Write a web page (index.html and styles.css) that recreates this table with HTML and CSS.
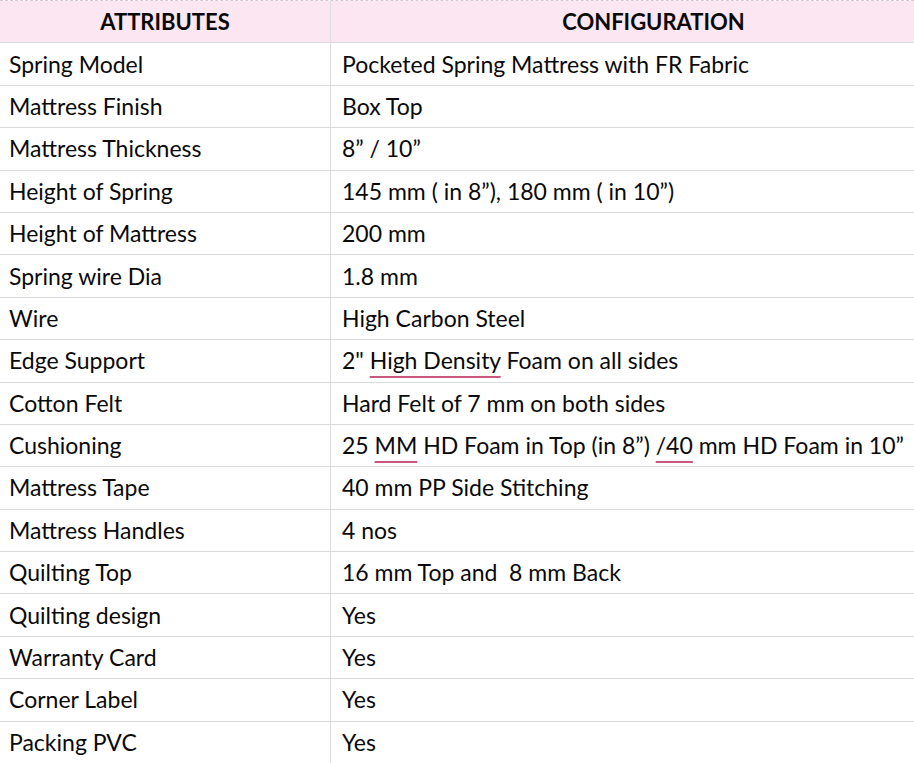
FILE: index.html
```html
<!DOCTYPE html>
<html>
<head>
<meta charset="utf-8">
<link rel="stylesheet" href="styles.css">
</head>
<body>
<div class="sheet">
  <div class="row head"><div class="c1"><span>ATTRIBUTES</span></div><div class="c2"><span>CONFIGURATION</span></div></div>
  <div class="row"><div class="c1"><span>Spring Model</span></div><div class="c2"><span>Pocketed Spring Mattress with FR Fabric</span></div></div>
  <div class="row"><div class="c1"><span>Mattress Finish</span></div><div class="c2"><span>Box Top</span></div></div>
  <div class="row"><div class="c1"><span>Mattress Thickness</span></div><div class="c2"><span>8” / 10”</span></div></div>
  <div class="row"><div class="c1"><span>Height of Spring</span></div><div class="c2"><span>145 mm ( in 8”), 180 mm ( in 10”)</span></div></div>
  <div class="row"><div class="c1"><span>Height of Mattress</span></div><div class="c2"><span>200 mm</span></div></div>
  <div class="row"><div class="c1"><span>Spring wire Dia</span></div><div class="c2"><span>1.8 mm</span></div></div>
  <div class="row"><div class="c1"><span>Wire</span></div><div class="c2"><span>High Carbon Steel</span></div></div>
  <div class="row"><div class="c1"><span>Edge Support</span></div><div class="c2"><span>2" <span class="sp">High Density</span> Foam on all sides</span></div></div>
  <div class="row"><div class="c1"><span>Cotton Felt</span></div><div class="c2"><span>Hard Felt of 7 mm on both sides</span></div></div>
  <div class="row"><div class="c1"><span>Cushioning</span></div><div class="c2"><span>25 <span class="sp">MM</span> HD Foam in Top (in 8”) <span class="sp">/40</span> mm HD Foam in 10”</span></div></div>
  <div class="row"><div class="c1"><span>Mattress Tape</span></div><div class="c2"><span>40 mm PP Side Stitching</span></div></div>
  <div class="row"><div class="c1"><span>Mattress Handles</span></div><div class="c2"><span>4 nos</span></div></div>
  <div class="row"><div class="c1"><span>Quilting Top</span></div><div class="c2"><span>16 mm Top and &nbsp;8 mm Back</span></div></div>
  <div class="row"><div class="c1"><span>Quilting design</span></div><div class="c2"><span>Yes</span></div></div>
  <div class="row"><div class="c1"><span>Warranty Card</span></div><div class="c2"><span>Yes</span></div></div>
  <div class="row"><div class="c1"><span>Corner Label</span></div><div class="c2"><span>Yes</span></div></div>
  <div class="row"><div class="c1"><span>Packing PVC</span></div><div class="c2"><span>Yes</span></div></div>
</div>
</body>
</html>
```

FILE: styles.css
```css
html, body {
  margin: 0;
  padding: 0;
  background: #ffffff;
  overflow: hidden;
}
.sheet {
  width: 914px;
  height: 763px;
  overflow: hidden;
  font-family: Lato, "Liberation Sans", sans-serif;
  font-size: 23px;
  color: #0a0a0a;
  border-top: 1px dashed #d8c8d0;
  box-sizing: border-box;
}
.row {
  display: grid;
  grid-template-columns: 331px 645px;
  height: 42.4px;
  border-bottom: 1px solid #dadada;
  box-sizing: border-box;
}
.row > div {
  display: flex;
  align-items: center;
  white-space: nowrap;
  padding-bottom: 1px;
}
.c1 {
  padding-left: 9px;
  border-right: 1px solid #dcdcdc;
}
.c2 {
  padding-left: 11px;
}
.head {
  background: #fce6f1;
}
.head > div {
  justify-content: center;
  padding-left: 0;
  font-weight: 700;
  font-size: 22px;
}
.sp {
  text-decoration: underline;
  text-decoration-color: #c8577e;
  text-decoration-thickness: 2px;
  text-underline-offset: 7px;
}
```
